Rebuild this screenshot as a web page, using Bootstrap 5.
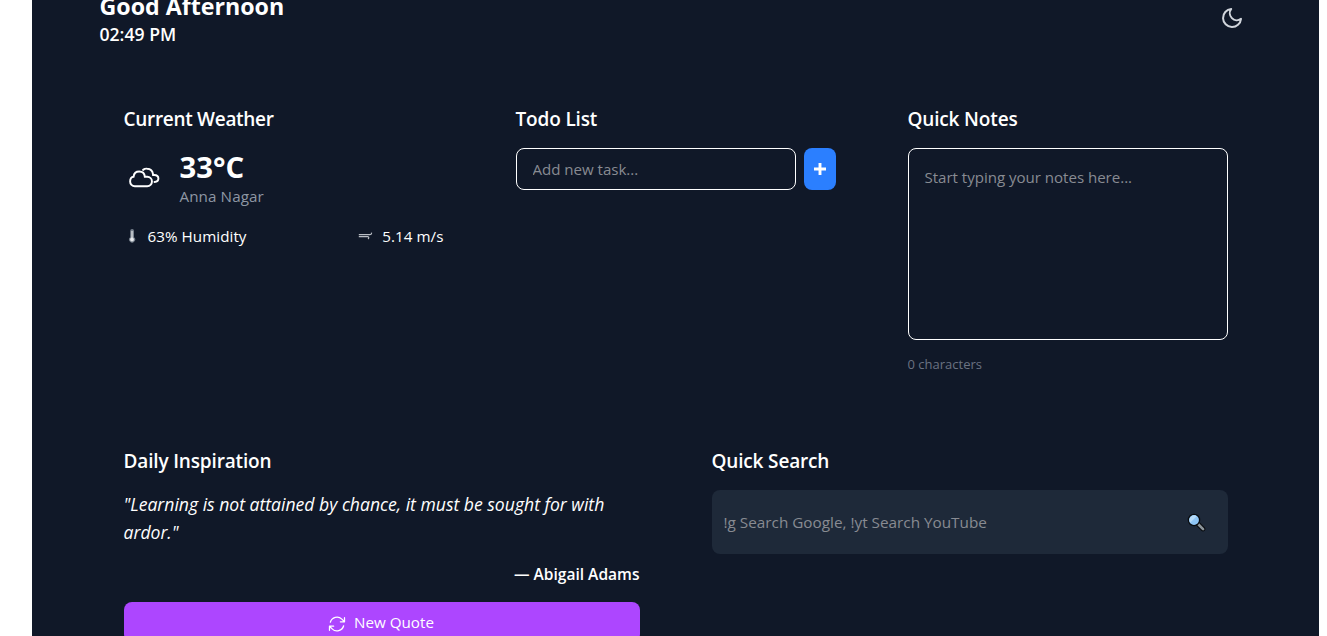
<!DOCTYPE html>
<html lang="en">
<head>
<meta charset="utf-8">
<meta name="viewport" content="width=device-width, initial-scale=1">
<title>Dashboard</title>
<link href="https://cdn.jsdelivr.net/npm/bootstrap@5.3.0/dist/css/bootstrap.min.css" rel="stylesheet">
<style>
html,body{height:100%;overflow:hidden}
body{background:#fff;font-family:"Open Sans","Noto Sans",sans-serif;font-size:15.2px;line-height:24px;color:#fff;padding:0 8px 0 32px}
.page{background:#101828;height:100vh;overflow:hidden}
.dash{width:1152px;margin:-12px auto 0}
.topbar{height:60px;margin-bottom:32px}
.hello{font-size:23.2px;line-height:32px;font-weight:700;margin:0;padding-top:2px;color:#fff}
.clock{font-size:17.6px;line-height:28px;font-weight:600;margin:-2px 0 0}
.deck{display:grid;grid-template-columns:repeat(3,1fr);gap:24px;margin-bottom:24px}
.deck.halves{grid-template-columns:repeat(2,1fr)}
.panel{padding:24px;min-width:0}
.panel h2{font-size:19px;line-height:28px;font-weight:600;margin:0;padding:1px 0 15px;letter-spacing:-.16px;color:#fff}
.panel h2.wide-title{letter-spacing:-.3px}
.temp{font-size:29.3px;line-height:36px;font-weight:700;padding-top:1px;margin-bottom:-1px}
.place{color:#99a1af;opacity:.92;letter-spacing:.1px}
.facts{margin-top:16px;letter-spacing:.05px}
.facts svg{margin-right:8px}
.form-control,.form-control:focus{background:transparent;border:1px solid #fff;border-radius:8px;color:#fff;font-size:15.1px;line-height:24px;box-shadow:none;letter-spacing:-.03px}
.form-control::placeholder{color:#888b92;opacity:1}
.task,.task:focus{height:42px;padding:8px 16px}
.add,.add:hover{width:32px;height:42px;background:#2b7fff;border-radius:8px;color:#fff;padding:0;border:0;flex:none}
.notes,.notes:focus{height:192px;padding:16px 16px;resize:none}
.count{font-size:13px;line-height:20px;color:#6a7282;margin-top:14px}
.quote{font-size:17.6px;line-height:28px;font-style:italic;margin:0 0 16px;letter-spacing:-.01px}
.author{font-size:15.55px;font-weight:600;text-align:right;margin:0 0 16px}
.new-quote,.new-quote:hover{background:#ad46ff;color:#fff;border-radius:8px;height:40px;font-size:inherit;border:0;padding:0 2px 0 0}
.search{background:#1e2939;border-radius:8px;height:64px;padding:0 22px 0 12px}
.search .form-control{border:0;padding:0;font-size:15.3px;letter-spacing:0}
</style>
</head>
<body>
<main class="page">
<div class="dash">
  <header class="topbar d-flex justify-content-between align-items-center">
    <div><h1 class="hello">Good Afternoon</h1><p class="clock">02:49 PM</p></div>
    <button class="btn p-2 border-0 d-flex" aria-label="Theme"><svg width="24" height="24" viewBox="0 0 24 24" fill="none" stroke="#d1d5dc" stroke-width="2" stroke-linecap="round" stroke-linejoin="round"><path d="M21 12.79A9 9 0 1 1 11.21 3 7 7 0 0 0 21 12.79z"/></svg></button>
  </header>
  <section class="deck">
    <div class="panel">
      <h2 class="wide-title">Current Weather</h2>
      <div class="d-flex align-items-center gap-3">
        <svg width="40" height="40" viewBox="0 0 30 30" fill="none" stroke="#fff" stroke-width="1.45" stroke-linecap="round">
          <path d="M8.16 21.15h9.28a3.5 3.5 0 0 0 0-7.05h-1.800c-.2-2.4-1.900-3.950-4.200-3.950s-4 1.600-4.250 3.850c-1.600.2-2.600 1.600-2.600 3.600a3.5 3.5 0 0 0 3.570 3.550z"/>
          <path d="M14.300 8.900c.9-.7 1.900-1 3.100-.9 2.200.1 4 1.600 4.300 3.900l.1.800h.800c1.900 0 3.200 1.200 3.200 2.700s-1.200 2.500-2.900 2.600"/>
        </svg>
        <div><div class="temp">33°C</div><div class="place">Anna Nagar</div></div>
      </div>
      <div class="facts d-flex justify-content-between">
        <div class="d-flex align-items-center"><svg width="16" height="16" viewBox="0 0 16 16"><path d="M6.200 3a1.900 1.900 0 0 1 3.800 0v6.200a3 3 0 1 1-3.800 0z" fill="#77808d"/><path d="M8 3v8" stroke="#d5d8dc" stroke-width="1.400"/><circle cx="8" cy="11.500" r="1.900" fill="#e7e9ec"/></svg>63% Humidity</div>
        <div class="d-flex align-items-center"><svg width="16" height="16" viewBox="0 0 16 16" fill="none" stroke="#b9bdc4" stroke-width="1.200"><path d="M.8 6.600h11c1.300 0 1.900-.6 1.700-2M.8 8.600h9c1.300 0 1.300 1.900.1 2.300"/></svg>5.14 m/s</div>
      </div>
    </div>
    <div class="panel">
      <h2>Todo List</h2>
      <div class="d-flex gap-2">
        <input class="form-control task" placeholder="Add new task...">
        <button class="btn add d-flex align-items-center justify-content-center" aria-label="Add"><svg width="16" height="16" viewBox="0 0 16 16"><path d="M8 2v12M2 8h12" stroke="#fff" stroke-width="2.900"/></svg></button>
      </div>
    </div>
    <div class="panel">
      <h2>Quick Notes</h2>
      <textarea class="form-control notes" placeholder="Start typing your notes here..."></textarea>
      <div class="count">0 characters</div>
    </div>
  </section>
  <section class="deck halves">
    <div class="panel">
      <h2>Daily Inspiration</h2>
      <p class="quote">"Learning is not attained by chance, it must be sought for with ardor."</p>
      <p class="author">— Abigail Adams</p>
      <button class="btn new-quote w-100 d-flex align-items-center justify-content-center"><svg style="margin:3px 7px 0 0" width="20" height="20" viewBox="0 0 24 24" fill="none" stroke="#fff" stroke-width="1.500" stroke-linecap="round" stroke-linejoin="round"><path d="M16.023 9.348h4.992v-.001M2.985 19.644v-4.992m0 0h4.992m-4.993 0l3.181 3.183a8.250 8.250 0 0013.803-3.700M4.031 9.865a8.250 8.250 0 0113.803-3.700l3.181 3.182m0-4.991v4.990"/></svg>New Quote</button>
    </div>
    <div class="panel">
      <h2>Quick Search</h2>
      <div class="search d-flex align-items-center">
        <input class="form-control" placeholder="!g Search Google, !yt Search YouTube">
        <svg class="flex-shrink-0" width="19" height="19" viewBox="0 0 19 19"><path d="M11 11l5 5" stroke="#080a0d" stroke-width="4.600" stroke-linecap="round"/><path d="M11.500 11.500l4.600 4.600" stroke="#8b949b" stroke-width="2.600" stroke-linecap="round"/><circle cx="7" cy="7" r="5.600" fill="#8ec5f5" stroke="#080a0d" stroke-width="1.300"/><path d="M3.200 9.700a4.700 4.700 0 0 1 6.500-6.500z" fill="#b5dbf9"/></svg>
      </div>
    </div>
  </section>
</div>
</main>
<script src="https://cdn.jsdelivr.net/npm/bootstrap@5.3.0/dist/js/bootstrap.bundle.min.js"></script>
</body>
</html>
